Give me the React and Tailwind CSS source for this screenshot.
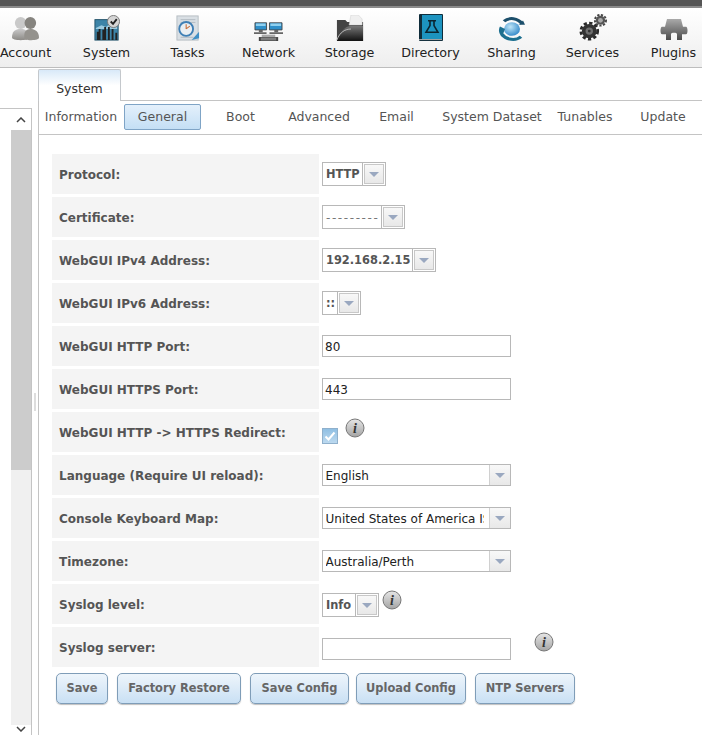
import React from "react";

const font = "font-['DejaVu_Sans',sans-serif]";

const AccountIcon = () => (
  <svg width="27" height="24" viewBox="0 0 28 28" preserveAspectRatio="none">
    <defs>
      <linearGradient id="acc" x1="0" y1="0" x2="0" y2="1">
        <stop offset="0" stopColor="#c8c8c8" />
        <stop offset="1" stopColor="#8c8a86" />
      </linearGradient>
    </defs>
    <ellipse cx="9" cy="7" rx="6" ry="7" fill="#c9c9c9" />
    <path d="M0 24c0-7 3-10 9-10s8 3 8 10c0 2-3 3-8 3s-9-1-9-3z" fill="url(#acc)" />
    <ellipse cx="19" cy="7" rx="6" ry="7" fill="#86847f" />
    <path d="M13 25c-1-7 1-11 6-11s9 3 9 10c0 2-3 3-8 3s-7-1-7-2z" fill="#94928d" />
  </svg>
);

const SystemIcon = () => (
  <svg width="26" height="26" viewBox="0 0 28 28" preserveAspectRatio="none">
    <rect x="1" y="5" width="25" height="22" fill="#3d84a8" stroke="#1f4f66" />
    <path d="M2 14l6-3 5 2 6-5 6 2v5H2z" fill="#9ccbe0" />
    <path d="M3 27v-9h2v-3h2v12zM9 27V16h2v-3h2v14zM15 27V13h2v14zM19 27V15h2v12zM23 27v-8h2v8z" fill="#222" />
    <circle cx="21" cy="7" r="6.5" fill="#d5d5d5" stroke="#777" />
    <path d="M18 7l2.5 2.5L24.5 4.5" fill="none" stroke="#222" strokeWidth="2" />
  </svg>
);

const TasksIcon = () => (
  <svg width="24" height="26" viewBox="0 0 26 28" preserveAspectRatio="none">
    <rect x="1" y="1" width="23" height="26" fill="#d9dfe4" stroke="#b5bcc2" />
    <path d="M5 5h16M5 8h16M5 24h14" stroke="#b0b8c0" />
    <circle cx="11" cy="15" r="7.5" fill="#e9eef2" stroke="#3f7fb5" strokeWidth="2" />
    <path d="M11 15l4-3M11 15v-5" stroke="#c9703c" strokeWidth="1.2" />
    <path d="M17 27l8-9v7z" fill="#3f8fc5" />
  </svg>
);

const NetworkIcon = () => (
  <svg width="29" height="19" viewBox="0 0 30 24" preserveAspectRatio="none">
    <path d="M1 1h12v9H1zM16 1h13v9H16z" fill="#2f8fc9" stroke="#444" />
    <path d="M2 2h10v3H2zM17 2h11v3H17z" fill="#8fd0ef" />
    <path d="M5 10h4v3H5zM21 10h4v3h-4z" fill="#666" />
    <path d="M0 13h13v2H0zM16 13h14v2H16z" fill="#666" />
    <path d="M8 16h14v3H8z" fill="#aaa" />
    <path d="M5 19h20v5H5z" fill="#444" />
    <path d="M7 20.5h16M7 22.5h16" stroke="#ccc" strokeWidth=".7" />
  </svg>
);

const StorageIcon = () => (
  <svg width="28" height="26" viewBox="0 0 30 26" preserveAspectRatio="none">
    <defs>
      <linearGradient id="fold" x1="0" y1="0" x2="0" y2="1">
        <stop offset="0" stopColor="#777" />
        <stop offset="1" stopColor="#111" />
      </linearGradient>
    </defs>
    <path d="M1 5h9l2 2h17v19H1z" fill="#444" />
    <path d="M16 0h8l4 4v6H14z" fill="#efefef" stroke="#ccc" strokeWidth=".5" />
    <path d="M1 26C4 17 10 11 16 11h13v15z" fill="url(#fold)" />
    <path d="M1 25C4 17 10 14 16 14" stroke="#bbb" fill="none" />
  </svg>
);

const DirectoryIcon = () => (
  <svg width="24" height="27" viewBox="0 0 24 28" preserveAspectRatio="none">
    <rect x="0" y="0" width="24" height="28" rx="1" fill="#0f2c3a" />
    <rect x="3" y="1" width="20" height="25" fill="#1d93bf" />
    <path d="M9 7h8M11 7v5l-4 7h12l-4-7V7" fill="none" stroke="#0b2530" strokeWidth="1.6" />
    <path d="M0 26.5h23" stroke="#aaa" />
  </svg>
);

const SharingIcon = () => (
  <svg width="28" height="24" viewBox="0 0 28 28" preserveAspectRatio="none">
    <defs>
      <radialGradient id="globe" cx=".4" cy=".35" r=".7">
        <stop offset="0" stopColor="#bfe6f8" />
        <stop offset="1" stopColor="#2e86c8" />
      </radialGradient>
    </defs>
    <circle cx="14" cy="14" r="8" fill="url(#globe)" />
    <path d="M6 5C11 0 20 1 24 8" fill="none" stroke="#1c4f6b" strokeWidth="3.5" />
    <path d="M21 9l6 0-2-5z" fill="#1c4f6b" />
    <path d="M23 23c-5 5-15 4-19-3" fill="none" stroke="#1c6f8f" strokeWidth="3.5" />
    <path d="M2 11c-2 4-1 9 2 12l3-9z" fill="#1c6f8f" />
  </svg>
);

const ServicesIcon = () => (
  <svg width="28" height="27" viewBox="0 0 30 30" preserveAspectRatio="none">
    <circle cx="11" cy="19" r="9" fill="none" stroke="#2a2a2a" strokeWidth="3" strokeDasharray="3.5 2.5" />
    <circle cx="11" cy="19" r="8" fill="#333" />
    <circle cx="11" cy="19" r="4" fill="#6f6f6f" />
    <circle cx="11" cy="19" r="1.5" fill="#333" />
    <circle cx="23" cy="7" r="6" fill="none" stroke="#444" strokeWidth="2" strokeDasharray="2.4 1.6" />
    <circle cx="23" cy="7" r="5" fill="#555" />
    <circle cx="23" cy="7" r="2.6" fill="#a8a8a8" />
  </svg>
);

const PluginsIcon = () => (
  <svg width="28" height="23" viewBox="0 0 28 24" preserveAspectRatio="none">
    <defs>
      <linearGradient id="plug" x1="0" y1="0" x2="0" y2="1">
        <stop offset="0" stopColor="#aaa" />
        <stop offset="1" stopColor="#4a4a4a" />
      </linearGradient>
    </defs>
    <path d="M7 1h14l2 8h3c2 0 2 8 0 8h-4v6h-5v-6c0-2-6-2-6 0v6H6v-6H2c-2 0-2-8 0-8h3z" fill="url(#plug)" />
  </svg>
);

const InfoIcon = () => (
  <svg width="20" height="20" viewBox="0 0 20 20" className="shrink-0">
    <defs>
      <linearGradient id="inf" x1="0" y1="0" x2="0" y2="1">
        <stop offset="0" stopColor="#e6e6e6" />
        <stop offset="1" stopColor="#a4a4a4" />
      </linearGradient>
    </defs>
    <circle cx="10" cy="10" r="9" fill="url(#inf)" stroke="#777" />
    <text x="10" y="15" textAnchor="middle" fontFamily="Liberation Serif" fontStyle="italic" fontWeight="700" fontSize="14" fill="#333">i</text>
  </svg>
);

const nav = [
  ["Account", AccountIcon],
  ["System", SystemIcon],
  ["Tasks", TasksIcon],
  ["Network", NetworkIcon],
  ["Storage", StorageIcon],
  ["Directory", DirectoryIcon],
  ["Sharing", SharingIcon],
  ["Services", ServicesIcon],
  ["Plugins", PluginsIcon],
];

const subtabs = [
  ["Information", "w-[86px]"],
  ["General", "w-[77px]"],
  ["Boot", "w-[79px]"],
  ["Advanced", "w-[78px]"],
  ["Email", "w-[77px]"],
  ["System Dataset", "w-[114px]"],
  ["Tunables", "w-[72px]"],
  ["Update", "w-[84px]"],
];

const Arrow = () => <span className="w-0 h-0 border-x-[5px] border-x-transparent border-t-[5px] border-t-[#9aa8c0]" />;

const SmallSelect = ({ value, plain, wide }) => (
  <div className="flex h-[24px] border border-[#b8b8b8] bg-white">
    <div className={`pl-[3px] pt-[2px] flex items-center border-r border-[#b8b8b8] ${wide ? "pr-[4px]" : "pr-[2px]"} ${plain ? "text-[12px] tracking-[1.6px] font-normal text-[#777]" : "text-[11.4px] font-bold text-[#555]"}`}>{value}</div>
    <div className="m-[1px] w-[20px] border border-[#c8c8c8] bg-gradient-to-b from-[#f8f8f8] to-[#e8e8e8] flex items-center justify-center">
      <Arrow />
    </div>
  </div>
);

const WideSelect = ({ value }) => (
  <div className="flex w-[189px] h-[22px] border border-[#b8b8b8] bg-white">
    <div className="flex-1 min-w-0 ml-[2.5px] mr-[5px] pt-[2px] flex items-center text-[12px] text-[#222] overflow-hidden whitespace-nowrap">{value}</div>
    <div className="w-[21px] shrink-0 border-l border-[#d0d0d0] bg-gradient-to-b from-[#f8f8f8] to-[#e8e8e8] flex items-center justify-center">
      <Arrow />
    </div>
  </div>
);

const TextInput = ({ value }) => (
  <div className="w-[189px] h-[22px] border border-[#b8b8b8] bg-white px-[2px] pt-[2px] flex items-center text-[12px] text-[#222]">{value}</div>
);

const Check = () => (
  <span className="w-[16px] h-[16px] mt-[16px] border border-[#8fb0cc] bg-gradient-to-b from-[#8fbfe3] to-[#bcd9ef] flex items-center justify-center">
    <svg width="12" height="12" viewBox="0 0 12 12">
      <path d="M1.5 6.5l3 3 6-7" fill="none" stroke="#fff" strokeWidth="2" />
    </svg>
  </span>
);

const rows = [
  ["Protocol:", <SmallSelect value="HTTP" />],
  ["Certificate:", <SmallSelect value="---------" plain />],
  ["WebGUI IPv4 Address:", <SmallSelect value="192.168.2.15" />],
  ["WebGUI IPv6 Address:", <SmallSelect value="::" />],
  ["WebGUI HTTP Port:", <TextInput value="80" />],
  ["WebGUI HTTPS Port:", <TextInput value="443" />],
  ["WebGUI HTTP -> HTTPS Redirect:", (
    <div className="flex items-start gap-[7px] self-start">
      <Check />
      <span className="mt-[6px]"><InfoIcon /></span>
    </div>
  )],
  ["Language (Require UI reload):", <WideSelect value="English" />],
  ["Console Keyboard Map:", <WideSelect value="United States of America ISO-8859-1" />],
  ["Timezone:", <WideSelect value="Australia/Perth" />],
  ["Syslog level:", (
    <div className="flex items-start gap-[3px] self-start mt-[9px]">
      <SmallSelect value="Info" wide />
      <span className="-mt-[3px]"><InfoIcon /></span>
    </div>
  )],
  ["Syslog server:", (
    <div className="flex items-center gap-[23px]">
      <div className="mt-[3px]"><TextInput value="" /></div>
      <span className="-mt-[10px]"><InfoIcon /></span>
    </div>
  )],
];

const buttons = [
  ["Save", "w-[52px]"],
  ["Factory Restore", "w-[124px]"],
  ["Save Config", "w-[99px]"],
  ["Upload Config", "w-[110px] -ml-[2px]"],
  ["NTP Servers", "w-[100px]"],
];

export default function App() {
  return (
    <div className={`w-[702px] h-[735px] overflow-hidden flex flex-col bg-white ${font}`}>
      <div className="h-[8px] shrink-0 bg-[#555555] border-b-2 border-[#8a8a8a]" />
      <div className="h-[60px] shrink-0 flex -ml-[15px] bg-gradient-to-b from-white to-[#eeeeee] border-b border-[#bdbdbd]">
        {nav.map(([label, Icon]) => (
          <div key={label} className="w-[81px] shrink-0 flex flex-col items-center">
            <div className="h-[33px] flex items-end justify-center"><Icon /></div>
            <div className="text-[12.7px] leading-[15px] mt-[4px] text-[#222]">{label}</div>
          </div>
        ))}
      </div>

      <div className="flex-1 flex min-h-0">
        <div className="w-[32px] shrink-0 mt-[40px] border-t border-r border-[#c4c4c4] flex flex-col items-end">
          <div className="w-[20px] h-full flex flex-col">
            <div className="h-[21px] flex items-center justify-center">
              <svg width="10" height="6" viewBox="0 0 10 6"><path d="M1 5l4-4 4 4" fill="none" stroke="#444" strokeWidth="1.5" /></svg>
            </div>
            <div className="h-[340px] bg-[#cccccc]" />
            <div className="flex-1 bg-[#f0f0f0]" />
            <div className="h-[10px] bg-white flex items-start justify-center pt-[1px]">
              <svg width="10" height="6" viewBox="0 0 10 6"><path d="M1 1l4 4 4-4" fill="none" stroke="#444" strokeWidth="1.5" /></svg>
            </div>
          </div>
        </div>
        <div className="w-[6px] shrink-0 flex items-center justify-center">
          <div className="w-[2px] h-[18px] bg-[#ddd]" />
        </div>

        <div className="flex-1 min-w-0 flex flex-col">
          <div className="h-[33px] shrink-0 flex">
            <div className="mt-[1px] w-[83px] border border-b-0 border-[#c4c8cc] rounded-t-[2px] bg-gradient-to-b from-[#d8e9f8] via-white to-white flex items-center justify-center pt-[8px] text-[12.5px] text-[#333]">System</div>
            <div className="flex-1 border-b border-[#c4c4c4]" />
          </div>
          <div className="flex-1 min-h-0 border-l border-[#c4c4c4]">
            <div className="h-[34px] flex items-center -ml-[1px] border-b border-[#c4c4c4]">
              {subtabs.map(([label, width]) => (
                <div
                  key={label}
                  className={`${width} shrink-0 text-center text-[12.5px] whitespace-nowrap text-[#555] ${label === "General" ? "h-[26px] leading-[24px] -mt-[1px] border border-[#7fa4c6] rounded-[2px] bg-gradient-to-b from-[#e4f0fb] to-[#c4dff5] text-[#333]" : ""}`}
                >
                  {label}
                </div>
              ))}
            </div>

            <div className="pl-[13px] pt-[19px]">
              <div className="flex flex-col gap-[3px]">
                {rows.map(([label, control]) => (
                  <div key={label} className="flex h-[40px]">
                    <div className="w-[267px] shrink-0 bg-[#f4f4f4] pl-[7px] pt-[2px] flex items-center text-[12px] font-bold text-[#555] whitespace-nowrap">{label}</div>
                    <div className="pl-[3px] flex items-center">{control}</div>
                  </div>
                ))}
              </div>
              <div className="flex gap-[9px] pl-[4px] mt-[6px]">
                {buttons.map(([label, width]) => (
                  <div key={label} className={`${width} h-[31px] shrink-0 flex items-center justify-center rounded-[5px] border border-[#7f9db8] bg-gradient-to-b from-[#eef5fb] to-[#c9e0f4] shadow-[0_1px_1px_rgba(0,0,0,0.25)] text-[11.4px] font-bold text-[#666] whitespace-nowrap`}>{label}</div>
                ))}
              </div>
            </div>
          </div>
        </div>
      </div>
    </div>
  );
}
